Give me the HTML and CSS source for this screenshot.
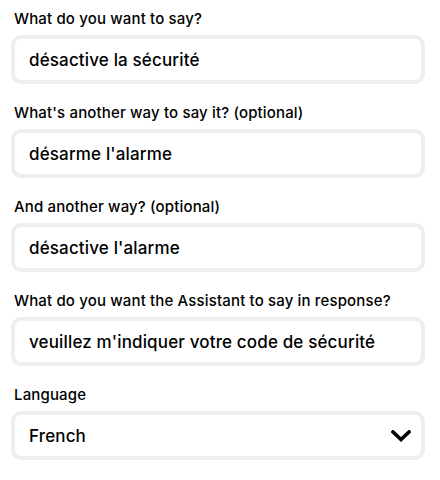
FILE: index.html
```html
<!DOCTYPE html>
<html>
<head>
<meta charset="utf-8">
<link rel="stylesheet" href="styles.css">
</head>
<body>
<div class="form">
  <div class="field">
    <label class="label">What do you want to say?</label>
    <div class="box">désactive la sécurité</div>
  </div>
  <div class="field">
    <label class="label">What's another way to say it? (optional)</label>
    <div class="box">désarme l'alarme</div>
  </div>
  <div class="field">
    <label class="label">And another way? (optional)</label>
    <div class="box">désactive l'alarme</div>
  </div>
  <div class="field">
    <label class="label">What do you want the Assistant to say in response?</label>
    <div class="box">veuillez m'indiquer votre code de sécurité</div>
  </div>
  <div class="field">
    <label class="label">Language</label>
    <div class="box select">
      <span>French</span>
      <svg class="chev" width="20" height="12" viewBox="0 0 20 12"><path d="M2 2 L10 9.5 L18 2" fill="none" stroke="#000" stroke-width="3.6" stroke-linecap="square"/></svg>
    </div>
  </div>
</div>
</body>
</html>
```
FILE: styles.css
```css
body {
  margin: 0;
  background: #fff;
  font-family: Inter, "Liberation Sans", sans-serif;
  color: #000;
}
.form {
  padding: 8px 15px 0 11px;
}
.field {
  margin-bottom: 18px;
}
.label {
  display: block;
  padding: 1px 0 0 3px;
  font-size: 15px;
  font-weight: 500;
  line-height: 19px;
  letter-spacing: 0.15px;
}
.box {
  box-sizing: border-box;
  height: 49px;
  margin-top: 7px;
  border: 4px solid #eeeeee;
  border-radius: 10px;
  padding: 0 14px;
  display: flex;
  align-items: center;
  font-size: 17px;
  font-weight: 500;
  letter-spacing: 0.15px;
}
.select {
  justify-content: space-between;
  padding-right: 10px;
}
.chev {
  display: block;
}
```
